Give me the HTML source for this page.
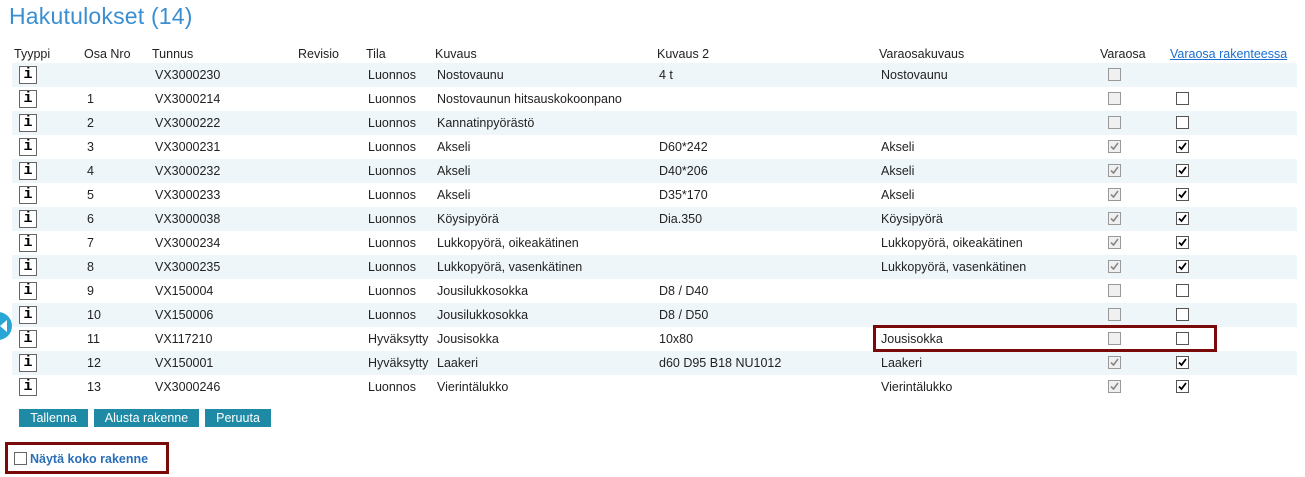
<!DOCTYPE html>
<html><head><meta charset="utf-8"><style>
body{margin:0;width:1305px;height:477px;background:#fff;font-family:"Liberation Sans",sans-serif;font-size:12.5px;color:#222;position:relative;overflow:hidden}
h1{position:absolute;left:9px;top:3px;margin:0;font-weight:normal;font-size:23px;color:#3b8fd1;letter-spacing:0.2px}
.hd{position:absolute;top:46px;height:17px;line-height:17px;color:#222}
.r{position:absolute;left:12px;width:1285px;height:24px;line-height:24px}
.r.s{background:#eef6fa}
.r span{position:absolute;top:0;white-space:nowrap}
.ic{position:absolute;left:7px;top:3px;width:16px;height:16px;border:1px solid #666;background:#fff;font:bold 15px "Liberation Mono",monospace;line-height:16px;text-align:center;color:#000}
.cb{position:absolute;top:5px;width:11px;height:11px;border:1px solid #8a8a8a;background:#fff}
.cb.g{background:#f0f0f0;left:1096px;border-color:#999}
.cb.b{left:1164px;border-color:#555}
.cb svg{position:absolute;left:0;top:0}
.btn{position:absolute;top:409px;height:18px;line-height:18px;background:#1f8aa5;color:#fff;text-align:center;font-size:12.5px}
</style></head><body>
<h1>Hakutulokset (14)</h1>
<div class="hd" style="left:14px">Tyyppi</div>
<div class="hd" style="left:84px">Osa Nro</div>
<div class="hd" style="left:152px">Tunnus</div>
<div class="hd" style="left:298px">Revisio</div>
<div class="hd" style="left:366px">Tila</div>
<div class="hd" style="left:435px">Kuvaus</div>
<div class="hd" style="left:657px">Kuvaus 2</div>
<div class="hd" style="left:879px">Varaosakuvaus</div>
<div class="hd" style="left:1100px">Varaosa</div>
<div class="hd" style="left:1170px;color:#1a6fd0;text-decoration:underline">Varaosa rakenteessa</div>

<div class="r s" style="top:63px"><div class="ic">i</div><span style="left:143px">VX3000230</span><span style="left:356px">Luonnos</span><span style="left:425px">Nostovaunu</span><span style="left:647px">4 t</span><span style="left:869px">Nostovaunu</span><div class="cb g"></div></div>
<div class="r" style="top:87px"><div class="ic">i</div><span style="left:75px">1</span><span style="left:143px">VX3000214</span><span style="left:356px">Luonnos</span><span style="left:425px">Nostovaunun hitsauskokoonpano</span><div class="cb g"></div><div class="cb b"></div></div>
<div class="r s" style="top:111px"><div class="ic">i</div><span style="left:75px">2</span><span style="left:143px">VX3000222</span><span style="left:356px">Luonnos</span><span style="left:425px">Kannatinpyörästö</span><div class="cb g"></div><div class="cb b"></div></div>
<div class="r" style="top:135px"><div class="ic">i</div><span style="left:75px">3</span><span style="left:143px">VX3000231</span><span style="left:356px">Luonnos</span><span style="left:425px">Akseli</span><span style="left:647px">D60*242</span><span style="left:869px">Akseli</span><div class="cb g"><svg width="11" height="11"><path d="M2 5.5l2.5 2.5 4.5-6" stroke="#888" stroke-width="1.6" fill="none"/></svg></div><div class="cb b"><svg width="11" height="11"><path d="M2 5.5l2.5 2.5 4.5-6" stroke="#000" stroke-width="1.8" fill="none"/></svg></div></div>
<div class="r s" style="top:159px"><div class="ic">i</div><span style="left:75px">4</span><span style="left:143px">VX3000232</span><span style="left:356px">Luonnos</span><span style="left:425px">Akseli</span><span style="left:647px">D40*206</span><span style="left:869px">Akseli</span><div class="cb g"><svg width="11" height="11"><path d="M2 5.5l2.5 2.5 4.5-6" stroke="#888" stroke-width="1.6" fill="none"/></svg></div><div class="cb b"><svg width="11" height="11"><path d="M2 5.5l2.5 2.5 4.5-6" stroke="#000" stroke-width="1.8" fill="none"/></svg></div></div>
<div class="r" style="top:183px"><div class="ic">i</div><span style="left:75px">5</span><span style="left:143px">VX3000233</span><span style="left:356px">Luonnos</span><span style="left:425px">Akseli</span><span style="left:647px">D35*170</span><span style="left:869px">Akseli</span><div class="cb g"><svg width="11" height="11"><path d="M2 5.5l2.5 2.5 4.5-6" stroke="#888" stroke-width="1.6" fill="none"/></svg></div><div class="cb b"><svg width="11" height="11"><path d="M2 5.5l2.5 2.5 4.5-6" stroke="#000" stroke-width="1.8" fill="none"/></svg></div></div>
<div class="r s" style="top:207px"><div class="ic">i</div><span style="left:75px">6</span><span style="left:143px">VX3000038</span><span style="left:356px">Luonnos</span><span style="left:425px">Köysipyörä</span><span style="left:647px">Dia.350</span><span style="left:869px">Köysipyörä</span><div class="cb g"><svg width="11" height="11"><path d="M2 5.5l2.5 2.5 4.5-6" stroke="#888" stroke-width="1.6" fill="none"/></svg></div><div class="cb b"><svg width="11" height="11"><path d="M2 5.5l2.5 2.5 4.5-6" stroke="#000" stroke-width="1.8" fill="none"/></svg></div></div>
<div class="r" style="top:231px"><div class="ic">i</div><span style="left:75px">7</span><span style="left:143px">VX3000234</span><span style="left:356px">Luonnos</span><span style="left:425px">Lukkopyörä, oikeakätinen</span><span style="left:869px">Lukkopyörä, oikeakätinen</span><div class="cb g"><svg width="11" height="11"><path d="M2 5.5l2.5 2.5 4.5-6" stroke="#888" stroke-width="1.6" fill="none"/></svg></div><div class="cb b"><svg width="11" height="11"><path d="M2 5.5l2.5 2.5 4.5-6" stroke="#000" stroke-width="1.8" fill="none"/></svg></div></div>
<div class="r s" style="top:255px"><div class="ic">i</div><span style="left:75px">8</span><span style="left:143px">VX3000235</span><span style="left:356px">Luonnos</span><span style="left:425px">Lukkopyörä, vasenkätinen</span><span style="left:869px">Lukkopyörä, vasenkätinen</span><div class="cb g"><svg width="11" height="11"><path d="M2 5.5l2.5 2.5 4.5-6" stroke="#888" stroke-width="1.6" fill="none"/></svg></div><div class="cb b"><svg width="11" height="11"><path d="M2 5.5l2.5 2.5 4.5-6" stroke="#000" stroke-width="1.8" fill="none"/></svg></div></div>
<div class="r" style="top:279px"><div class="ic">i</div><span style="left:75px">9</span><span style="left:143px">VX150004</span><span style="left:356px">Luonnos</span><span style="left:425px">Jousilukkosokka</span><span style="left:647px">D8 / D40</span><div class="cb g"></div><div class="cb b"></div></div>
<div class="r s" style="top:303px"><div class="ic">i</div><span style="left:75px">10</span><span style="left:143px">VX150006</span><span style="left:356px">Luonnos</span><span style="left:425px">Jousilukkosokka</span><span style="left:647px">D8 / D50</span><div class="cb g"></div><div class="cb b"></div></div>
<div class="r" style="top:327px"><div class="ic">i</div><span style="left:75px">11</span><span style="left:143px">VX117210</span><span style="left:356px">Hyväksytty</span><span style="left:425px">Jousisokka</span><span style="left:647px">10x80</span><span style="left:869px">Jousisokka</span><div class="cb g"></div><div class="cb b"></div></div>
<div class="r s" style="top:351px"><div class="ic">i</div><span style="left:75px">12</span><span style="left:143px">VX150001</span><span style="left:356px">Hyväksytty</span><span style="left:425px">Laakeri</span><span style="left:647px">d60 D95 B18 NU1012</span><span style="left:869px">Laakeri</span><div class="cb g"><svg width="11" height="11"><path d="M2 5.5l2.5 2.5 4.5-6" stroke="#888" stroke-width="1.6" fill="none"/></svg></div><div class="cb b"><svg width="11" height="11"><path d="M2 5.5l2.5 2.5 4.5-6" stroke="#000" stroke-width="1.8" fill="none"/></svg></div></div>
<div class="r" style="top:375px"><div class="ic">i</div><span style="left:75px">13</span><span style="left:143px">VX3000246</span><span style="left:356px">Luonnos</span><span style="left:425px">Vierintälukko</span><span style="left:869px">Vierintälukko</span><div class="cb g"><svg width="11" height="11"><path d="M2 5.5l2.5 2.5 4.5-6" stroke="#888" stroke-width="1.6" fill="none"/></svg></div><div class="cb b"><svg width="11" height="11"><path d="M2 5.5l2.5 2.5 4.5-6" stroke="#000" stroke-width="1.8" fill="none"/></svg></div></div>

<div style="position:absolute;left:873px;top:325px;width:338px;height:21px;border:3px solid #7a0a0a"></div>
<div style="position:absolute;left:-16px;top:312px;width:28px;height:28px;border-radius:50%;background:#2aa6d6"></div>
<div style="position:absolute;left:0;top:320px;width:0;height:0;border-top:6px solid transparent;border-bottom:6px solid transparent;border-right:7px solid #fff"></div>

<div class="btn" style="left:19px;width:69px">Tallenna</div>
<div class="btn" style="left:94px;width:105px">Alusta rakenne</div>
<div class="btn" style="left:205px;width:66px">Peruuta</div>

<div style="position:absolute;left:5px;top:442px;width:158px;height:26px;border:3px solid #7a0a0a"></div>
<div style="position:absolute;left:14px;top:452px;width:11px;height:11px;border:1px solid #666;background:#fff"></div>
<div style="position:absolute;left:30px;top:451px;font-weight:bold;color:#2a6fb8;font-size:12.5px;line-height:16px">Näytä koko rakenne</div>
</body></html>
